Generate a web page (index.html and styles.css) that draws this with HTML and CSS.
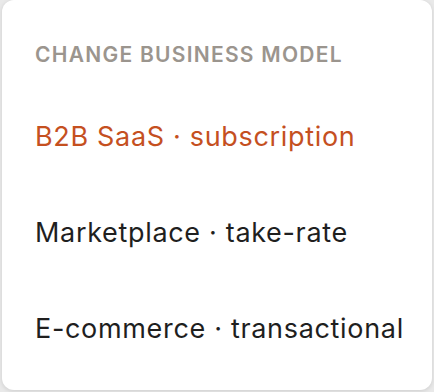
FILE: index.html
```html
<!DOCTYPE html>
<html>
<head>
    <title>Change business model</title>
    <link rel="stylesheet" href="styles.css">
</head>
<body>
    <div class="menu">
        <div class="menu-title">Change business model</div>
        <div class="menu-item active">B2B SaaS · subscription</div>
        <div class="menu-item">Marketplace · take-rate</div>
        <div class="menu-item">E-commerce · transactional</div>
    </div>
</body>
</html>
```
FILE: styles.css
```css
body {
    margin: 0;
    height: 392px;
    background-color: #e9e9e9;
    font-family: Inter, "Noto Sans", sans-serif;
    overflow: hidden;
}

.menu {
    display: flex;
    flex-direction: column;
    width: 430px;
    height: 390px;
    margin-left: 2px;
    box-sizing: border-box;
    padding: 42px 20px 0 33px;
    background-color: #fff;
    border-radius: 12px;
    box-shadow: 0 1px 4px rgba(0, 0, 0, 0.12);
}

.menu-title {
    font-size: 21px;
    font-weight: 600;
    letter-spacing: 0.06em;
    text-transform: uppercase;
    color: #9b958e;
    line-height: 26px;
    margin-bottom: 53px;
}

.menu-item {
    font-size: 27px;
    line-height: 32px;
    letter-spacing: 0.025em;
    white-space: nowrap;
    color: #1f1f1f;
    margin-bottom: 64px;
}

.menu-item.active {
    color: #c5501f;
}
```
